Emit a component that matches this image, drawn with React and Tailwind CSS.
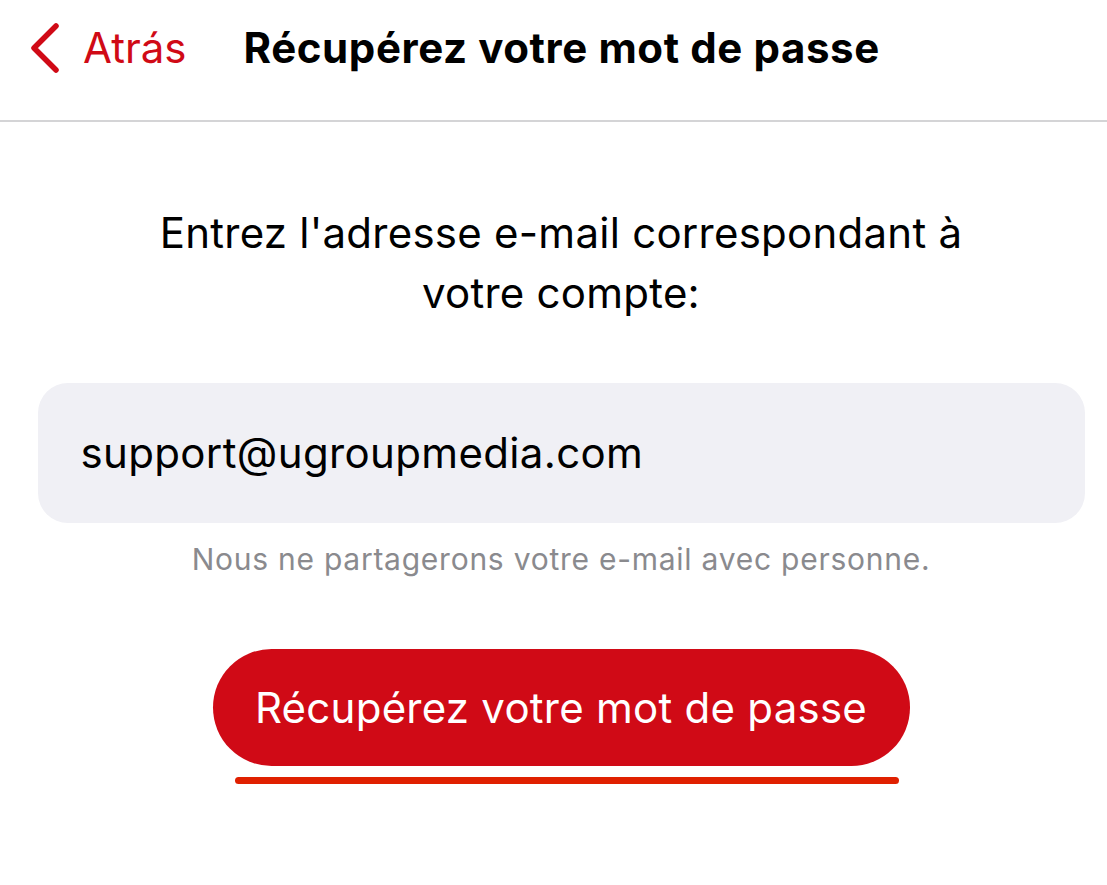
import React from "react";

export default function App() {
  return (
    <div className="w-[1107px] h-[885px] bg-white overflow-hidden" style={{ fontFamily: "Inter, 'Noto Sans', sans-serif" }}>
      <header className="h-[122px] border-b-2 border-[#d4d4d6] flex items-center pb-[24px]">
        <button className="flex items-center pl-[27px] text-[#d00a16]">
          <svg width="34" height="50" viewBox="0 0 34 50" className="mr-[22px]">
            <path d="M29 3 L7 25 L29 47" fill="none" stroke="#d00a16" strokeWidth="5.5" strokeLinecap="round" strokeLinejoin="round" />
          </svg>
          <span className="text-[42px] leading-none">Atrás</span>
        </button>
        <h1 className="ml-[57px] text-[42px] font-bold leading-none text-black tracking-[0.6px]">Récupérez votre mot de passe</h1>
      </header>
      <main className="flex flex-col items-center pl-[15px]">
        <p className="mt-[81px] text-center text-[42px] leading-[60px] text-black tracking-[0.25px]">
          Entrez l'adresse e-mail correspondant à
          <br />
          votre compte:
        </p>
        <div className="mt-[60px] w-[1047px] h-[140px] rounded-[30px] bg-[#f0f0f5] flex items-center px-[43px]">
          <span className="text-[42px] leading-none text-black tracking-[0.35px]">support@ugroupmedia.com</span>
        </div>
        <p className="mt-[21px] text-[30px] leading-none text-[#8a8a8e] tracking-[0.75px]">Nous ne partagerons votre e-mail avec personne.</p>
        <button className="mt-[75px] w-[697px] h-[117px] rounded-full bg-[#d00a16] text-white text-[42px] leading-none tracking-[0.25px]">
          Récupérez votre mot de passe
        </button>
        <div className="mt-[11px] ml-[12px] w-[664px] h-[7px] rounded-full bg-[#e02000]" />
      </main>
    </div>
  );
}
